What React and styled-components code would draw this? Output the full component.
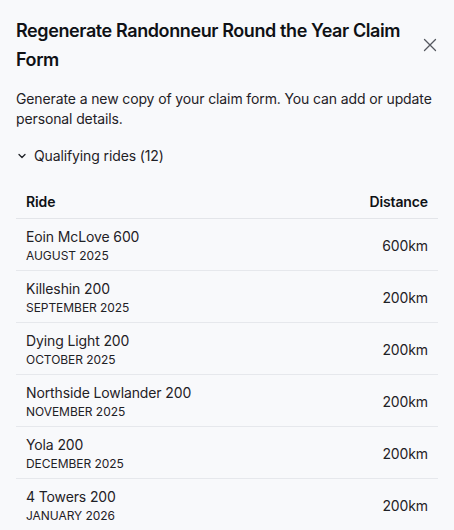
import React from "react";
import styled, { createGlobalStyle } from "styled-components";

const Global = createGlobalStyle`
  html, body { margin: 0; padding: 0; background: #f8f9fb; }
  body { font-family: Inter, "Noto Sans", sans-serif; color: #111318; -webkit-font-smoothing: antialiased; }
`;

const Panel = styled.div`
  width: 454px;
  height: 530px;
  overflow: hidden;
  box-sizing: border-box;
  padding: 16px 16px 0 16px;
  background: #f8f9fb;
`;

const Header = styled.div`
  display: flex;
  align-items: flex-start;
  justify-content: space-between;
  gap: 8px;
`;

const Title = styled.h2`
  margin: 0;
  font-size: 18px;
  font-weight: 600;
  line-height: 29px;
  letter-spacing: -0.4px;
  color: #0f1115;
`;

const CloseButton = styled.button`
  flex: none;
  border: none;
  background: none;
  padding: 0;
  margin-top: 21px;
  width: 16px;
  height: 16px;
  display: flex;
  align-items: center;
  justify-content: center;
  color: #55585f;
  cursor: pointer;
`;

const Description = styled.p`
  margin: 15px 0 0 0;
  font-size: 14px;
  line-height: 20px;
  letter-spacing: -0.12px;
  color: #1f2126;
`;

const Toggle = styled.button`
  display: flex;
  align-items: center;
  gap: 7px;
  margin-top: 16px;
  padding: 0 0 0 1px;
  border: none;
  background: none;
  font-family: inherit;
  font-size: 14px;
  line-height: 21px;
  letter-spacing: -0.12px;
  color: #1f2126;
`;

const Table = styled.table`
  width: 100%;
  margin-top: 17px;
  border-collapse: collapse;
  font-size: 14px;
  letter-spacing: -0.12px;
`;

const Th = styled.th`
  text-align: ${(p) => (p.$right ? "right" : "left")};
  font-weight: 600;
  padding: 10px 10px 8px 10px;
  height: 17px;
  line-height: 17px;
  border-bottom: 1px solid #e3e5e9;
  color: #0f1115;
`;

const Tr = styled.tr`
  border-bottom: 1px solid #e6e8ec;
`;

const Td = styled.td`
  padding: 8px 10px 6px 10px;
  height: 37px;
  text-align: ${(p) => (p.$right ? "right" : "left")};
  vertical-align: middle;
  color: #1f2126;
`;

const RideName = styled.div`
  font-size: 14px;
  line-height: 20px;
`;

const RideDate = styled.div`
  font-size: 12px;
  line-height: 17px;
  letter-spacing: -0.05px;
  text-transform: uppercase;
  color: #1f2126;
`;

const rides = [
  ["Eoin McLove 600", "August 2025", "600km"],
  ["Killeshin 200", "September 2025", "200km"],
  ["Dying Light 200", "October 2025", "200km"],
  ["Northside Lowlander 200", "November 2025", "200km"],
  ["Yola 200", "December 2025", "200km"],
  ["4 Towers 200", "January 2026", "200km"],
];

export default function App() {
  return (
    <>
      <Global />
      <Panel>
        <Header>
          <Title>Regenerate Randonneur Round the Year Claim Form</Title>
          <CloseButton aria-label="Close">
            <svg width="14" height="14" viewBox="0 0 14 14" fill="none" stroke="currentColor" strokeWidth="1.3" strokeLinecap="round">
              <path d="M1.5 1.5L12.5 12.5M12.5 1.5L1.5 12.5" />
            </svg>
          </CloseButton>
        </Header>
        <Description>
          Generate a new copy of your claim form. You can add or update personal details.
        </Description>
        <Toggle>
          <svg width="10" height="10" viewBox="0 0 10 10" fill="none" stroke="currentColor" strokeWidth="1.3" strokeLinecap="round" strokeLinejoin="round">
            <path d="M2 3.5L5 6.5L8 3.5" />
          </svg>
          Qualifying rides (12)
        </Toggle>
        <Table>
          <thead>
            <tr>
              <Th>Ride</Th>
              <Th $right>Distance</Th>
            </tr>
          </thead>
          <tbody>
            {rides.map(([name, date, dist]) => (
              <Tr key={name}>
                <Td>
                  <RideName>{name}</RideName>
                  <RideDate>{date}</RideDate>
                </Td>
                <Td $right>{dist}</Td>
              </Tr>
            ))}
          </tbody>
        </Table>
      </Panel>
    </>
  );
}
